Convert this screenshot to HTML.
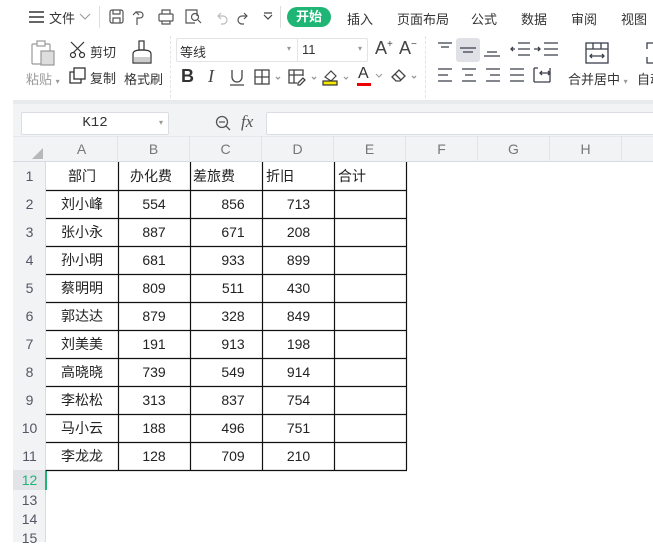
<!DOCTYPE html>
<html><head><meta charset="utf-8"><style>
*{margin:0;padding:0;box-sizing:border-box}
body{width:653px;height:542px;overflow:hidden;background:#fff;position:relative;font-family:"Liberation Sans","Noto Sans CJK SC",sans-serif;color:#333}
.a{position:absolute;white-space:nowrap}
.t{font-size:13px;color:#333}
.ic{position:absolute}
.cell{position:absolute;font-size:14px;color:#222;line-height:28px;height:28px}
.rh{position:absolute;left:13px;width:33px;text-align:center;font-size:14px;color:#556}
.ch{position:absolute;top:136px;height:26px;line-height:26px;text-align:center;font-size:14px;color:#777;border-right:1px solid #dfe3ea}
</style></head><body>
<svg class="ic" style="left:28px;top:10px" width="17" height="14"><path d="M1 2h15M1 7h15M1 12h15" stroke="#333" stroke-width="1.4"/></svg>
<div class="a t" style="left:49px;top:8px">文件</div>
<svg class="ic" style="left:79px;top:13px" width="12" height="8"><path d="M1 1l5 5 5-5" stroke="#999" fill="none"/></svg>
<div class="a" style="left:99px;top:6px;width:1px;height:22px;background:#ddd"></div>
<svg class="ic" style="left:109px;top:8px" width="180" height="18" fill="none" stroke="#555" stroke-width="1.2">
<rect x="1" y="2" width="13" height="13" rx="2"/><path d="M4 2v4h7V2M4 15v-5h7v5"/>
<path d="M27 4h4a3 3 0 010 6h-3v7M24 7l3-3 3 3"/>
<rect x="50" y="6" width="14" height="7" rx="1"/><path d="M53 6V2h8v4M53 13v3h8v-3"/>
<path d="M86 15h-9V2h11v6"/><circle cx="86" cy="9" r="3.5"/><path d="M89 12l3 3"/>
<path d="M112 5l-3 3 3 3M109 8h5a4 4 0 010 8h-2" stroke="#bbb"/>
<path d="M135 5l3 3-3 3M138 8h-5a4 4 0 000 8h2"/>
<path d="M155 7l4 4 4-4M155 5h8" stroke="#444"/>
</svg>
<div class="a" style="left:280px;top:6px;width:1px;height:22px;background:#ddd"></div>
<div class="a" style="left:287px;top:7px;width:44px;height:20px;border-radius:10px;background:#1fb575;color:#fff;font-size:13px;line-height:20px;text-align:center;font-weight:bold">开始</div>
<div class="a t" style="left:347px;top:9px">插入</div>
<div class="a t" style="left:397px;top:9px">页面布局</div>
<div class="a t" style="left:471px;top:9px">公式</div>
<div class="a t" style="left:521px;top:9px">数据</div>
<div class="a t" style="left:571px;top:9px">审阅</div>
<div class="a t" style="left:621px;top:9px">视图</div>
<svg class="ic" style="left:30px;top:40px" width="26" height="26" fill="none" stroke="#999" stroke-width="1.2"><rect x="2" y="4" width="18" height="20" rx="1"/><rect x="7" y="1" width="8" height="5" fill="#fff"/><rect x="11" y="11" width="13" height="14" fill="#ddd"/></svg>
<div class="a" style="left:26px;top:69px;font-size:13px;color:#999">粘贴 <span style="font-size:8px">▾</span></div>
<svg class="ic" style="left:69px;top:41px" width="18" height="18" fill="none" stroke="#333" stroke-width="1.2"><path d="M2 1l11 11M15 1L4 12"/><circle cx="4" cy="14" r="2.5"/><circle cx="13" cy="14" r="2.5"/></svg>
<div class="a t" style="left:90px;top:42px">剪切</div>
<svg class="ic" style="left:69px;top:67px" width="18" height="18" fill="none" stroke="#333" stroke-width="1.3"><rect x="5" y="1" width="11" height="11"/><path d="M5 5H1v11h11v-4"/></svg>
<div class="a t" style="left:90px;top:68px">复制</div>
<svg class="ic" style="left:131px;top:40px" width="22" height="25" fill="none" stroke="#333" stroke-width="1.2"><rect x="8" y="1" width="5" height="9"/><path d="M2 14q0-4 8-4h2q8 0 8 4v9H2z"/><rect x="3" y="17" width="16" height="5" fill="#ccc" stroke="none"/></svg>
<div class="a t" style="left:124px;top:69px">格式刷</div>
<div class="a" style="left:170px;top:36px;width:1px;height:62px;border-left:1px dashed #e3e3e3"></div>
<div class="a" style="left:176px;top:38px;width:192px;height:24px;border:1px solid #e2e4e8;border-radius:2px"></div>
<div class="a" style="left:297px;top:38px;width:1px;height:24px;background:#e2e4e8"></div>
<div class="a t" style="left:180px;top:42px">等线</div>
<div class="a" style="left:287px;top:44px;font-size:8px;color:#999">▾</div>
<div class="a t" style="left:302px;top:42px">11</div>
<div class="a" style="left:358px;top:44px;font-size:8px;color:#999">▾</div>
<div class="a" style="left:375px;top:38px;font-size:18px;color:#444">A<sup style="font-size:10px">+</sup></div>
<div class="a" style="left:399px;top:38px;font-size:18px;color:#444">A<sup style="font-size:10px">−</sup></div>
<div class="a" style="left:181px;top:66px;font-size:18px;font-weight:bold;color:#333">B</div>
<div class="a" style="left:208px;top:66px;font-size:18px;font-style:italic;color:#444;font-family:'Liberation Serif',serif">I</div>
<svg class="ic" style="left:229px;top:69px" width="16" height="18" fill="none" stroke="#444" stroke-width="1.3"><path d="M3 1v7a5 5 0 0010 0V1M1 16h14"/></svg>
<svg class="ic" style="left:254px;top:69px" width="30" height="17" fill="none" stroke="#444" stroke-width="1.3"><rect x="1" y="1" width="14" height="14"/><path d="M8 1v14M1 8h14"/><path d="M22 8l2 2 2-2" stroke="#999"/></svg>
<svg class="ic" style="left:288px;top:69px" width="30" height="17" fill="none" stroke="#444" stroke-width="1.3"><path d="M9 14H1V1h14v6M1 6h14M6 1v13"/><path d="M10 14l5-5 2 2-5 5h-2z"/><path d="M24 8l2 2 2-2" stroke="#999"/></svg>
<svg class="ic" style="left:322px;top:67px" width="30" height="20" fill="none" stroke="#444" stroke-width="1.2"><path d="M3 10l6-6 5 5-5 5z"/><rect x="1" y="14" width="14" height="4" fill="#f5e700" stroke="#333"/><path d="M22 10l2 2 2-2" stroke="#999"/></svg>
<div class="a" style="left:358px;top:65px;font-size:16px;color:#333">A</div>
<div class="a" style="left:357px;top:83px;width:14px;height:3px;background:#e00"></div>
<svg class="ic" style="left:375px;top:73px" width="10" height="6"><path d="M1 1l3 3 3-3" stroke="#999" fill="none"/></svg>
<svg class="ic" style="left:390px;top:67px" width="30" height="18" fill="none" stroke="#444" stroke-width="1.3"><path d="M2 10l7-7 6 6-5 5H6z"/><path d="M5 7l6 6"/><path d="M22 9l2 2 2-2" stroke="#999"/></svg>
<div class="a" style="left:425px;top:36px;width:1px;height:62px;border-left:1px dashed #e3e3e3"></div>
<div class="a" style="left:456px;top:38px;width:24px;height:24px;background:#dfe1e6;border-radius:3px"></div>
<svg class="ic" style="left:436px;top:40px" width="125" height="50" fill="none" stroke="#3a3f4b" stroke-width="1.3">
<path d="M2 3h14M5 7h8"/><path d="M24 8h16M27 12h10"/><path d="M51 12h10M48 16h16"/>
<path d="M82 3h12M82 9h12M82 15h12M79 9h-4M77 7l-2 2 2 2"/><path d="M108 3h14M108 9h14M108 15h14M98 9h6M102 7l2 2-2 2"/>
<path d="M2 29h14M2 35h10M2 41h14"/><path d="M26 29h14M29 35h8M26 41h14"/><path d="M50 29h14M54 35h10M50 41h14"/><path d="M74 29h14M74 35h14M74 41h14"/>
<path d="M98 28v14M98 28h4M98 42h16M104 33h10M106 31l-2 2 2 2M112 31l2 2-2 2M114 28v14"/>
</svg>
<svg class="ic" style="left:585px;top:42px" width="24" height="22" fill="none" stroke="#3a3f4b" stroke-width="1.3"><rect x="1" y="1" width="22" height="20"/><path d="M1 7h22M8 1v6M16 1v6M5 14h14M7 12l-2 2 2 2M17 12l2 2-2 2"/></svg>
<div class="a t" style="left:568px;top:69px">合并居中 <span style="font-size:8px;color:#999">▾</span></div>
<svg class="ic" style="left:646px;top:42px" width="10" height="22" fill="none" stroke="#3a3f4b" stroke-width="1.3"><path d="M7 1H1v6M1 15v6h6"/></svg>
<div class="a t" style="left:637px;top:69px">自动</div>
<div class="a" style="left:13px;top:100px;width:640px;height:4px;background:#e8eaee"></div>
<div class="a" style="left:13px;top:104px;width:640px;height:58px;background:#f2f3f5"></div>
<div class="a" style="left:21px;top:112px;width:148px;height:23px;background:#fff;border:1px solid #dadde3;border-radius:2px;font-family:'Liberation Mono',monospace;font-size:14px;line-height:21px;text-align:center;color:#333">K12<span style="position:absolute;right:5px;font-size:8px;color:#999">▾</span></div>
<svg class="ic" style="left:215px;top:115px" width="18" height="18" fill="none" stroke="#555" stroke-width="1.3"><circle cx="7" cy="7" r="5.5"/><path d="M4 7h6M11 11l4 4"/></svg>
<div class="a" style="left:241px;top:112px;font-size:17px;font-style:italic;color:#555;font-family:'Liberation Serif',serif">fx</div>
<div class="a" style="left:266px;top:112px;width:390px;height:23px;background:#fff;border:1px solid #dadde3;border-radius:2px"></div>
<div class="a" style="left:13px;top:136px;width:640px;height:1px;background:#e6e8ec"></div>
<div class="a" style="left:13px;top:161px;width:640px;height:1px;background:#d6dbe3"></div>
<div class="a" style="left:13px;top:162px;width:33px;height:380px;background:#f2f3f5;border-right:1px solid #d6dbe3"></div>
<svg class="ic" style="left:32px;top:148px" width="12" height="12"><path d="M11 0v11H0z" fill="#b8b8b8"/></svg>
<div class="ch" style="left:46px;width:72px">A</div>
<div class="ch" style="left:118px;width:72px">B</div>
<div class="ch" style="left:190px;width:72px">C</div>
<div class="ch" style="left:262px;width:72px">D</div>
<div class="ch" style="left:334px;width:72px">E</div>
<div class="ch" style="left:406px;width:72px">F</div>
<div class="ch" style="left:478px;width:72px">G</div>
<div class="ch" style="left:550px;width:72px">H</div>
<div class="rh" style="top:162px;line-height:28px">1</div>
<div class="rh" style="top:190px;line-height:28px">2</div>
<div class="rh" style="top:218px;line-height:28px">3</div>
<div class="rh" style="top:246px;line-height:28px">4</div>
<div class="rh" style="top:274px;line-height:28px">5</div>
<div class="rh" style="top:302px;line-height:28px">6</div>
<div class="rh" style="top:330px;line-height:28px">7</div>
<div class="rh" style="top:358px;line-height:28px">8</div>
<div class="rh" style="top:386px;line-height:28px">9</div>
<div class="rh" style="top:414px;line-height:28px">10</div>
<div class="rh" style="top:442px;line-height:28px">11</div>
<div class="rh" style="top:470px;height:20px;line-height:21px;background:#e2e4e8;color:#1fb575">12</div>
<div class="rh" style="top:491px;line-height:19px">13</div>
<div class="rh" style="top:510px;line-height:19px">14</div>
<div class="rh" style="top:529px;line-height:19px">15</div>
<div class="a" style="left:45px;top:470px;width:2px;height:20px;background:#1fb575"></div>
<svg class="ic" style="left:0;top:0" width="653" height="542"><g stroke="#111" stroke-width="1.2">
<path d="M118.5 162v308M190.5 162v308M262.5 162v308M334.5 162v308M406.5 162v308"/>
<path d="M46 190.5h361M46 218.5h361M46 246.5h361M46 274.5h361M46 302.5h361M46 330.5h361M46 358.5h361M46 386.5h361M46 414.5h361M46 442.5h361M46 470.5h361"/>
</g></svg>
<div id="cells"></div>
<script>
var d=[["部门","办化费","差旅费","折旧","合计"],["刘小峰",554,856,713],["张小永",887,671,208],["孙小明",681,933,899],["蔡明明",809,511,430],["郭达达",879,328,849],["刘美美",191,913,198],["高晓晓",739,549,914],["李松松",313,837,754],["马小云",188,496,751],["李龙龙",128,709,210]];
var h="";d.forEach(function(r,i){var y=162+28*i;
 h+='<div class="cell" style="left:46px;width:72px;top:'+y+'px;text-align:center">'+r[0]+'</div>';
 if(i==0){h+='<div class="cell" style="left:130px;top:'+y+'px">'+r[1]+'</div><div class="cell" style="left:193px;top:'+y+'px">'+r[2]+'</div><div class="cell" style="left:266px;top:'+y+'px">'+r[3]+'</div><div class="cell" style="left:338px;top:'+y+'px">'+r[4]+'</div>';}
 else{h+='<div class="cell" style="left:118px;width:72px;top:'+y+'px;text-align:center">'+r[1]+'</div><div class="cell" style="left:190px;width:72px;top:'+y+'px;text-align:center;padding-left:14px">'+r[2]+'</div><div class="cell" style="left:262px;width:72px;top:'+y+'px;text-align:center;padding-left:1px">'+r[3]+'</div>';}
});document.getElementById("cells").innerHTML=h;
</script>
</body></html>
